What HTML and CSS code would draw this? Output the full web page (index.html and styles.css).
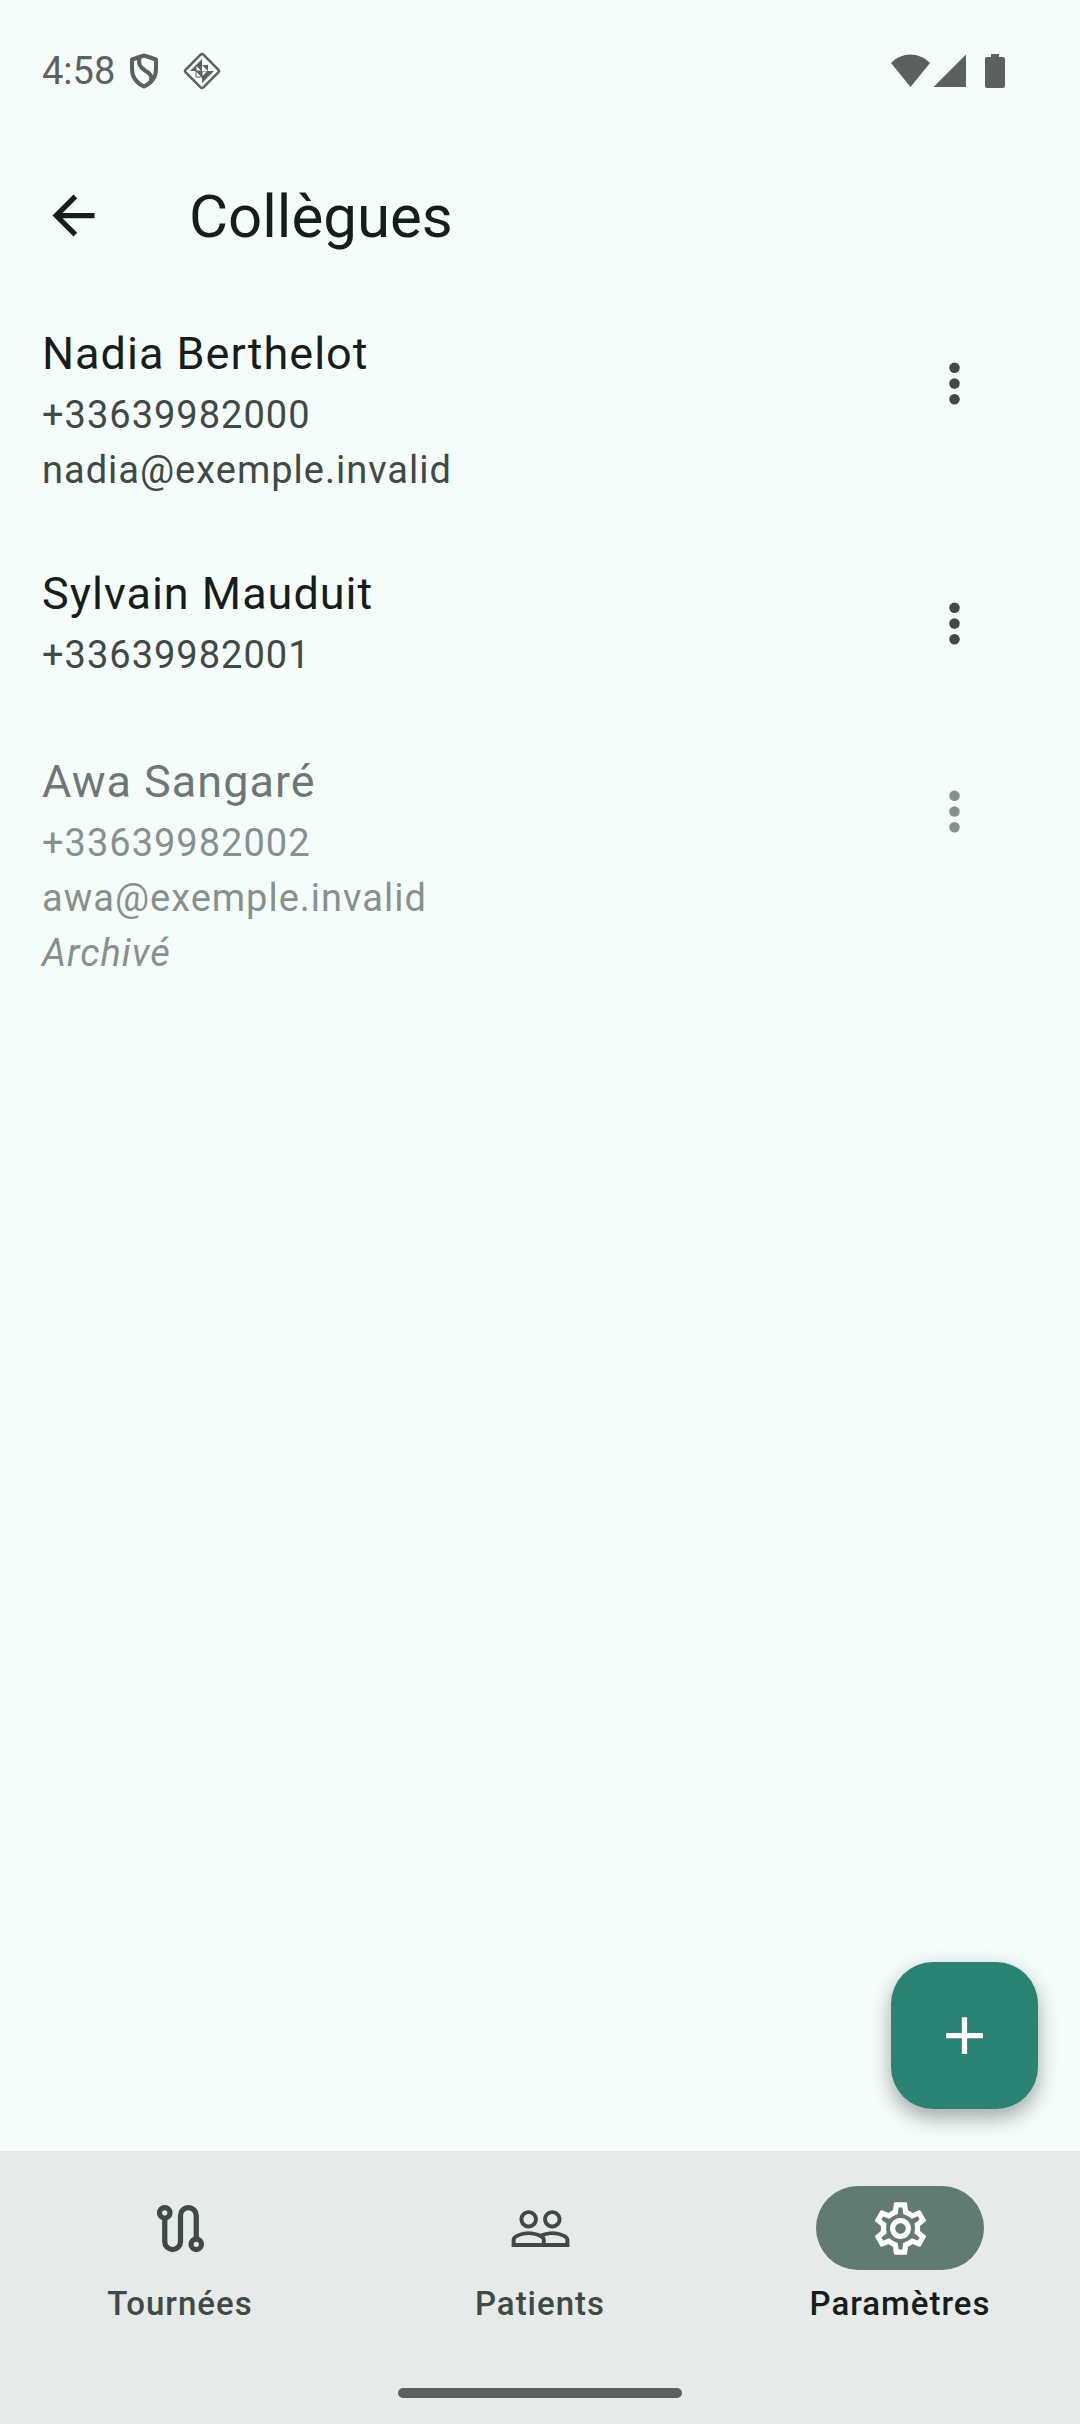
FILE: index.html
```html
<!DOCTYPE html>
<html lang="fr">
<head>
  <meta charset="utf-8">
  <meta name="viewport" content="width=device-width, initial-scale=1">
  <title>Collègues</title>
  <link rel="stylesheet" href="styles.css">
</head>
<body>
  <div class="status-bar">
    <div class="status-left">
      <span class="clock">4:58</span>
      <svg class="status-shield" width="30" height="36" viewBox="0 0 30 36" aria-hidden="true">
        <path d="M15 2.500 27 6.500V16C27 24 22.500 30 15 33.500 7.500 30 3 24 3 16V6.500Z" fill="none" stroke="currentColor" stroke-width="4" stroke-linejoin="round"/>
        <path d="M10.500 4C9 11 11 14 16 17.500 22 21 24 24 21 30" fill="none" stroke="currentColor" stroke-width="4"/>
      </svg>
      <svg width="38" height="38" viewBox="0 0 38 38" aria-hidden="true">
        <rect x="6.500" y="6.500" width="25" height="25" rx="2" transform="rotate(45 19 19)" fill="none" stroke="currentColor" stroke-width="2.500"/>
        <path d="M19 7V13H13ZM13 13V19H7ZM13 13H19V19ZM19 13H25V19ZM13 19H19V25ZM19 19V25H25ZM19 19 25 25V19ZM25 19H31L25 25ZM19 25H25L19 31Z" fill="currentColor"/>
        <path d="M13 13V19H19ZM13 19V25H19Z" fill="none" stroke="currentColor" stroke-width="1"/>
        <path d="M19.500 19.500H24L19.500 24Z" fill="#f4fdf9"/>
      </svg>
    </div>
    <div class="status-right">
      <svg width="115" height="36" viewBox="0 0 115 36" fill="currentColor" aria-hidden="true">
        <path d="M0 10C11-1.500 28-1.500 39 10L19.500 34Z"/>
        <path d="M42.500 34 75 1.500V34Z"/>
        <path d="M100 1h8v3h4a2 2 0 0 1 2 2v27a2 2 0 0 1-2 2H96a2 2 0 0 1-2-2V6a2 2 0 0 1 2-2h4Z"/>
      </svg>
    </div>
  </div>

  <header class="app-bar">
    <button class="icon-button" type="button" aria-label="Retour">
      <svg class="icon" viewBox="0 0 24 24" aria-hidden="true"><path d="M20 11H7.830l5.590-5.590L12 4l-8 8 8 8 1.410-1.410L7.830 13H20z"/></svg>
    </button>
    <h1 class="title">Collègues</h1>
  </header>

  <main class="content">
    <ul class="contacts">
      <li class="contact">
        <div class="contact-text">
          <h2 class="name">Nadia Berthelot</h2>
          <p class="detail">+33639982000</p>
          <p class="detail">nadia@exemple.invalid</p>
        </div>
        <button class="icon-button more" type="button" aria-label="Options pour Nadia Berthelot">
          <svg class="icon" viewBox="0 0 24 24" aria-hidden="true"><circle cx="12" cy="6" r="2"/><circle cx="12" cy="12" r="2"/><circle cx="12" cy="18" r="2"/></svg>
        </button>
      </li>
      <li class="contact">
        <div class="contact-text">
          <h2 class="name">Sylvain Mauduit</h2>
          <p class="detail">+33639982001</p>
        </div>
        <button class="icon-button more" type="button" aria-label="Options pour Sylvain Mauduit">
          <svg class="icon" viewBox="0 0 24 24" aria-hidden="true"><circle cx="12" cy="6" r="2"/><circle cx="12" cy="12" r="2"/><circle cx="12" cy="18" r="2"/></svg>
        </button>
      </li>
      <li class="contact archived">
        <div class="contact-text">
          <h2 class="name">Awa Sangaré</h2>
          <p class="detail">+33639982002</p>
          <p class="detail">awa@exemple.invalid</p>
          <p class="detail state">Archivé</p>
        </div>
        <button class="icon-button more" type="button" aria-label="Options pour Awa Sangaré">
          <svg class="icon" viewBox="0 0 24 24" aria-hidden="true"><circle cx="12" cy="6" r="2"/><circle cx="12" cy="12" r="2"/><circle cx="12" cy="18" r="2"/></svg>
        </button>
      </li>
    </ul>
    <button class="fab" type="button" aria-label="Ajouter">
      <svg class="icon" viewBox="0 0 24 24" aria-hidden="true"><path d="M19 13h-6v6h-2v-6H5v-2h6V5h2v6h6z"/></svg>
    </button>
  </main>

  <footer class="bottom">
    <nav class="tabs">
      <a class="tab" href="#tournees">
        <span class="pill">
          <svg class="icon" viewBox="0 0 24 24" aria-hidden="true"><g fill="none" stroke="currentColor" stroke-width="2"><circle cx="6" cy="6" r="2"/><circle cx="18" cy="18" r="2"/><path d="M6 8v9a3 3 0 0 0 6 0V7a3 3 0 0 1 6 0v9"/></g></svg>
        </span>
        <span class="tab-label">Tournées</span>
      </a>
      <a class="tab" href="#patients">
        <span class="pill">
          <svg class="icon" viewBox="0 0 24 24" aria-hidden="true"><path d="M16.500 13c-1.200 0-3.070.34-4.500 1-1.430-.67-3.300-1-4.500-1C5.330 13 1 14.080 1 16.250V19h22v-2.750c0-2.170-4.330-3.250-6.500-3.250zm-4 4.500h-10v-1.250c0-.54 2.560-1.750 5-1.750s5 1.210 5 1.750v1.250zm9 0H14v-1.250c0-.46-.2-.86-.52-1.220.88-.3 1.960-.53 3.020-.53 2.440 0 5 1.210 5 1.750v1.250zM7.500 12c1.930 0 3.500-1.570 3.500-3.500S9.430 5 7.500 5 4 6.570 4 8.500 5.570 12 7.500 12zm0-5.500c1.100 0 2 .9 2 2s-.9 2-2 2-2-.9-2-2 .9-2 2-2zm9 5.500c1.930 0 3.500-1.570 3.500-3.500S18.430 5 16.500 5 13 6.570 13 8.500s1.570 3.500 3.500 3.500zm0-5.500c1.100 0 2 .9 2 2s-.9 2-2 2-2-.9-2-2 .9-2 2-2z"/></svg>
        </span>
        <span class="tab-label">Patients</span>
      </a>
      <a class="tab selected" href="#parametres" aria-current="page">
        <span class="pill">
          <svg class="icon" viewBox="0 0 24 24" aria-hidden="true"><path d="M19.430 12.980c.04-.32.07-.64.07-.98 0-.34-.03-.66-.07-.98l2.110-1.650c.19-.15.24-.42.12-.64l-2-3.460c-.09-.16-.26-.25-.44-.25-.06 0-.12.01-.17.03l-2.490 1c-.52-.4-1.080-.73-1.690-.98l-.38-2.650C14.460 2.180 14.250 2 14 2h-4c-.25 0-.46.18-.49.42l-.38 2.650c-.61.25-1.170.59-1.690.98l-2.490-1c-.06-.02-.12-.03-.18-.03-.17 0-.34.09-.43.25l-2 3.460c-.13.22-.07.49.12.64l2.110 1.650c-.04.32-.07.65-.07.98 0 .33.03.66.07.98l-2.110 1.650c-.19.15-.24.42-.12.64l2 3.460c.09.16.26.25.44.25.06 0 .12-.01.17-.03l2.490-1c.52.4 1.080.73 1.690.98l.38 2.650c.03.24.24.42.49.42h4c.25 0 .46-.18.49-.42l.38-2.650c.61-.25 1.170-.59 1.690-.98l2.490 1c.06.02.12.03.18.03.17 0 .34-.09.43-.25l2-3.460c.12-.22.07-.49-.12-.64l-2.110-1.650zm-1.980-1.710c.04.31.05.52.05.73 0 .21-.02.43-.05.73l-.14 1.130.89.7 1.080.84-.7 1.210-1.270-.51-1.040-.42-.9.68c-.43.32-.84.56-1.250.73l-1.060.43-.16 1.130-.2 1.350h-1.400l-.19-1.350-.16-1.130-1.060-.43c-.43-.18-.83-.41-1.230-.71l-.91-.7-1.060.43-1.270.51-.7-1.210 1.080-.84.89-.7-.14-1.130c-.03-.31-.05-.54-.05-.74s.02-.43.05-.73l.14-1.130-.89-.7-1.080-.84.7-1.210 1.270.51 1.040.42.9-.68c.43-.32.84-.56 1.250-.73l1.060-.43.16-1.130.2-1.350h1.390l.19 1.350.16 1.130 1.060.43c.43.18.83.41 1.230.71l.91.7 1.060-.43 1.270-.51.7 1.210-1.070.85-.89.7.14 1.130zM12 8c-2.210 0-4 1.790-4 4s1.790 4 4 4 4-1.790 4-4-1.790-4-4-4zm0 6c-1.100 0-2-.9-2-2s.9-2 2-2 2 .9 2 2-.9 2-2 2z"/></svg>
        </span>
        <span class="tab-label">Paramètres</span>
      </a>
    </nav>
    <div class="home-indicator"></div>
  </footer>
</body>
</html>
```
FILE: styles.css
```css
:root {
  --surface: #f4fdf9;
  --bar: #e6ebe9;
  --on-surface: #171d1b;
  --on-surface-variant: #3f4946;
  --status: #5c615f;
  --primary: #2a8372;
  --secondary: #617a72;
}

* {
  box-sizing: border-box;
}

body {
  display: flex;
  flex-direction: column;
  min-height: 100vh;
  margin: 0;
  background: var(--surface);
  color: var(--on-surface);
  font-family: Roboto, "Noto Sans", sans-serif;
}

h1,
h2,
p,
ul {
  margin: 0;
  padding: 0;
  font-weight: 400;
}

button {
  padding: 0;
  border: 0;
  background: none;
  color: inherit;
  font: inherit;
}

svg {
  display: block;
}

.icon {
  width: 63px;
  height: 63px;
  fill: currentColor;
}

.status-bar {
  display: flex;
  justify-content: space-between;
  align-items: center;
  height: 142px;
  padding: 0 74px 0 42px;
  color: var(--status);
}

.status-left {
  display: flex;
  align-items: center;
}

.clock {
  font-size: 38px;
  line-height: 44px;
}

.status-shield {
  margin: 0 24px 0 14px;
}

.app-bar {
  display: flex;
  align-items: center;
  height: 146px;
  padding: 0 10px;
}

.icon-button {
  display: flex;
  flex: none;
  align-items: center;
  justify-content: center;
  width: 126px;
  height: 126px;
  border-radius: 50%;
}

.title {
  margin-left: 53px;
  padding-top: 3px;
  font-size: 60px;
  line-height: 76px;
}

.content {
  position: relative;
  flex: 1;
}

.contacts {
  list-style: none;
}

.contact {
  display: flex;
  justify-content: space-between;
  align-items: flex-start;
  padding: 32px 63px 30px 42px;
}

.name {
  font-size: 45px;
  line-height: 68px;
  letter-spacing: 1px;
}

.detail {
  color: var(--on-surface-variant);
  font-size: 38px;
  line-height: 55px;
  letter-spacing: 1px;
}

.more {
  color: var(--on-surface-variant);
}

.archived {
  opacity: 0.6;
}

.state {
  font-style: italic;
}

.fab {
  position: absolute;
  right: 42px;
  bottom: 42px;
  display: flex;
  align-items: center;
  justify-content: center;
  width: 147px;
  height: 147px;
  border-radius: 42px;
  background: var(--primary);
  color: #fff;
  box-shadow: 0 10px 20px rgba(0, 0, 0, 0.28), 0 4px 24px rgba(0, 0, 0, 0.08);
}

.bottom {
  background: var(--bar);
}

.tabs {
  display: grid;
  grid-template-columns: repeat(3, 1fr);
  padding-top: 35px;
}

.tab {
  display: flex;
  flex-direction: column;
  align-items: center;
  gap: 12px;
  color: var(--on-surface-variant);
  text-decoration: none;
}

.pill {
  display: flex;
  align-items: center;
  justify-content: center;
  width: 168px;
  height: 84px;
  border-radius: 42px;
}

.tab-label {
  font-size: 33px;
  font-weight: 500;
  line-height: 44px;
  letter-spacing: 1px;
}

.selected {
  color: var(--on-surface);
}

.selected .pill {
  background: var(--secondary);
  color: #fff;
}

.home-indicator {
  width: 284px;
  height: 10px;
  margin: 62px auto 26px;
  border-radius: 5px;
  background: var(--status);
}
```
